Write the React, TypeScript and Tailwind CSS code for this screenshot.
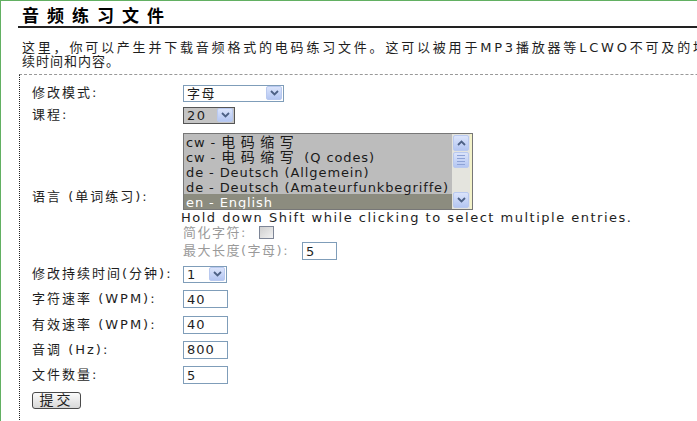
import React from "react";

const FONT = { fontFamily: '"DejaVu Sans", "Noto Sans CJK SC", sans-serif' };

function Chevron() {
  return (
    <svg width="9" height="6" viewBox="0 0 9 6">
      <path d="M1 1 L4.5 4.5 L8 1" fill="none" stroke="#4d6185" strokeWidth="1.8" />
    </svg>
  );
}

function DropBtn() {
  return (
    <div className="flex h-[14px] w-[16px] items-center justify-center rounded-[2px] border border-[#b9c9ef] bg-gradient-to-b from-[#dbe4fb] to-[#b4c6f2]">
      <Chevron />
    </div>
  );
}

function Select({ value, w, grey }: { value: string; w: string; grey?: boolean }) {
  return (
    <div
      className={`flex h-[17px] items-center justify-between border pl-[3px] pr-px tracking-[1.5px] ${w} ${
        grey ? "border-[#555] bg-[#c4c4c4]" : "border-[#7f9db9] bg-white"
      }`}
    >
      <span className="leading-none">{value}</span>
      <DropBtn />
    </div>
  );
}

function Input({ value, w = "w-[45px]" }: { value: string; w?: string }) {
  return (
    <div className={`flex h-[18px] items-center border border-[#7f9db9] bg-white pl-[3px] tracking-[1px] ${w}`}>
      <span className="leading-none">{value}</span>
    </div>
  );
}

function Row({ label, h, children }: { label: string; h: string; children: React.ReactNode }) {
  return (
    <div className={`flex items-center ${h}`}>
      <div className="w-[151px] shrink-0 whitespace-nowrap tracking-[2px]">{label}</div>
      {children}
    </div>
  );
}

type Seg = { t: string; cjk?: boolean };
const langs: Seg[][] = [
  [{ t: "cw - " }, { t: "电码缩写", cjk: true }],
  [{ t: "cw - " }, { t: "电码缩写", cjk: true }, { t: " (Q codes)" }],
  [{ t: "de - Deutsch (Allgemein)" }],
  [{ t: "de - Deutsch (Amateurfunkbegriffe)" }],
  [{ t: "en - English" }],
];

function Listbox() {
  return (
    <div className="mt-[7px] flex h-[77px] w-[290px] border border-[#777] bg-[#bcbcbc]">
      <div className="flex-1 overflow-hidden">
        {langs.map((segs, i) => (
          <div
            key={i}
            className={`h-[15px] whitespace-pre pl-[2px] pt-[2px] leading-[13px] tracking-[0.9px] ${
              i === 4 ? "bg-[#8c8c7f] text-white" : "text-[#1a1a1a]"
            }`}
          >
            {segs.map((s, j) => (
              <span key={j} className={s.cjk ? "text-[14px] leading-[13px] tracking-[5.5px]" : ""}>
                {s.t}
              </span>
            ))}
          </div>
        ))}
      </div>
      <div className="flex w-[20px] flex-col border-r-[2px] border-[#f3f2c9] bg-[#e4e4de] p-px">
        <div className="flex h-[16px] items-center justify-center rounded-[2px] border border-[#b9c9ef] bg-gradient-to-b from-[#dbe4fb] to-[#b4c6f2]">
          <svg width="9" height="6" viewBox="0 0 9 6">
            <path d="M1 5 L4.5 1.5 L8 5" fill="none" stroke="#4d6185" strokeWidth="1.8" />
          </svg>
        </div>
        <div className="mt-px flex h-[16px] flex-col items-center justify-center gap-[2px] rounded-[2px] border border-[#b9c9ef] bg-gradient-to-b from-[#dbe4fb] to-[#b4c6f2]">
          <div className="h-px w-[8px] bg-[#8ea3d6]" />
          <div className="h-px w-[8px] bg-[#8ea3d6]" />
          <div className="h-px w-[8px] bg-[#8ea3d6]" />
          <div className="h-px w-[8px] bg-[#8ea3d6]" />
        </div>
        <div className="flex-1" />
        <div className="flex h-[16px] items-center justify-center rounded-[2px] border border-[#b9c9ef] bg-gradient-to-b from-[#dbe4fb] to-[#b4c6f2]">
          <Chevron />
        </div>
      </div>
    </div>
  );
}

export default function App() {
  return (
    <div
      style={FONT}
      className="h-screen w-full overflow-hidden border-l border-t border-[#62b062] bg-white pl-[17px] text-[13px] tracking-[1.5px] text-[#1e1e1e]"
    >
      <h1 className="w-[900px] border-b-2 border-[#222] pl-[4px] pt-[5px] text-[17px] font-bold leading-[20px] tracking-[8px] text-black">
        音频练习文件
      </h1>
      <p className="mt-[13px] pl-[4px] leading-[14px] tracking-[1px]">
        <span className="whitespace-nowrap tracking-[2.8px]">
          这里，你可以产生并下载音频格式的电码练习文件。这可以被用于MP3播放器等LCWO不可及的地方。你可以定义练习持
        </span>
        <br />
        续时间和内容。
      </p>
      <div className="ml-px mt-[5px] w-[900px] border-l border-t border-l-[#222] border-t-[#999] pb-[40px] pl-[12px] pt-[7px] [border-left-style:dotted] [border-top-style:dashed]">
        <Row label="修改模式:" h="h-[22px]">
          <Select value="字母" w="w-[101px]" />
        </Row>
        <Row label="课程:" h="h-[22px]">
          <Select value="20" w="w-[52px]" grey />
        </Row>
        <div className="flex h-[136px] items-center">
          <div className="w-[151px] shrink-0 whitespace-nowrap pt-[6px] tracking-[2px]">语言 (单词练习):</div>
          <div className="flex h-full flex-col">
            <Listbox />
            <div className="ml-[-2px] flex h-[14px] items-center whitespace-nowrap leading-none">
              Hold down Shift while clicking to select multiple entries.
            </div>
            <div className="flex h-[17px] items-center text-[#9a9a9a]">
              <span className="w-[76px] whitespace-nowrap">简化字符:</span>
              <div className="h-[13px] w-[15px] border border-[#7d8596] bg-gradient-to-br from-[#cfcfcf] to-[#f2f2f2]" />
            </div>
            <div className="flex h-[20px] items-center text-[#9a9a9a]">
              <span className="w-[119px] whitespace-nowrap">最大长度(字母):</span>
              <div className="text-[#1e1e1e]">
                <Input value="5" w="w-[35px]" />
              </div>
            </div>
          </div>
        </div>
        <Row label="修改持续时间(分钟):" h="h-[24px]">
          <Select value="1" w="w-[44px]" />
        </Row>
        <Row label="字符速率 (WPM):" h="h-[26px]">
          <Input value="40" />
        </Row>
        <Row label="有效速率 (WPM):" h="h-[25px]">
          <Input value="40" />
        </Row>
        <Row label="音调 (Hz):" h="h-[25px]">
          <Input value="800" />
        </Row>
        <Row label="文件数量:" h="h-[26px]">
          <Input value="5" />
        </Row>
        <div className="flex h-[24px] items-center">
          <button className="flex h-[17px] w-[49px] items-center justify-center rounded-[3px] border border-[#4a4a4a] bg-gradient-to-b from-[#fbfbfb] to-[#d8d8d8] text-[14px] leading-none tracking-[3px] text-[#1e1e1e]">
            提交
          </button>
        </div>
      </div>
    </div>
  );
}
